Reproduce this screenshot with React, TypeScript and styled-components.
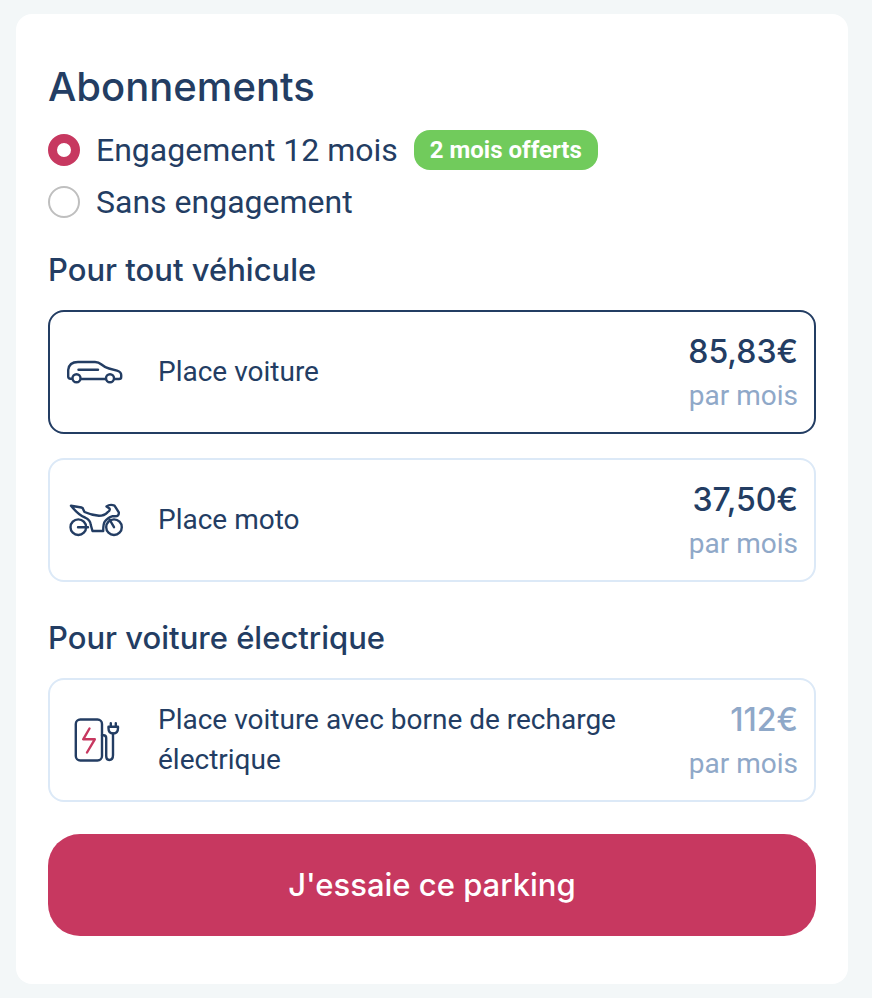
import React, { useState } from "react";
import styled, { createGlobalStyle } from "styled-components";

const navy = "#233d63";
const raspberry = "#c73860";
const mist = "#8fa8c8";
const heading = `"Inter", "Liberation Sans", sans-serif`;
const body = `"Roboto", "Noto Sans", sans-serif`;

const GlobalStyle = createGlobalStyle`
  *, *::before, *::after { box-sizing: border-box; }
  body {
    margin: 0;
    background: #f3f7f8;
    color: ${navy};
    font-family: ${body};
  }
`;

const Page = styled.main`
  padding: 14px 24px 14px 16px;
`;

const Card = styled.form`
  display: flex;
  flex-direction: column;
  padding: 48px 32px;
  border-radius: 16px;
  background: #fff;
`;

const Title = styled.h1`
  margin: 0 0 18px;
  font: 500 40px/50px ${heading};
`;

const Commitments = styled.fieldset`
  display: grid;
  gap: 12px;
  margin: 0 0 28px;
  padding: 0;
  border: 0;
`;

const RadioRow = styled.div`
  display: flex;
  align-items: center;
  gap: 16px;
  height: 40px;
`;

const RadioLabel = styled.label`
  display: flex;
  align-items: center;
  gap: 16px;
  font-size: 32px;
  line-height: 40px;
  cursor: pointer;
`;

const Radio = styled.input`
  appearance: none;
  width: 32px;
  height: 32px;
  margin: 0;
  border: 2px solid #bfbfbf;
  border-radius: 50%;
  background: #fff;
  &:checked { border: 9px solid ${raspberry}; }
`;

const Badge = styled.span`
  padding: 0 16px;
  border-radius: 16px;
  background: #71cb5c;
  color: #fff;
  font-size: 24px;
  font-weight: 700;
  line-height: 40px;
`;

const Section = styled.section`
  & + & { margin-top: 36px; }
`;

const SectionTitle = styled.h2`
  margin: 0 0 20px;
  font: 500 31px/40px ${heading};
`;

const OfferList = styled.div`
  display: grid;
  gap: 24px;
`;

const Offer = styled.button<{ $selected: boolean }>`
  display: flex;
  align-items: center;
  gap: 32px;
  width: 100%;
  min-height: 124px;
  padding: 12px 16px;
  border: 2px solid ${(p) => (p.$selected ? navy : "#dce9f7")};
  border-radius: 16px;
  background: #fff;
  color: ${navy};
  font-family: ${body};
  text-align: left;
  cursor: pointer;
`;

const OfferIcon = styled.svg`
  flex: none;
  width: 60px;
  height: 60px;
  fill: none;
  stroke: ${navy};
  stroke-width: 2.4;
  stroke-linecap: round;
  stroke-linejoin: round;
`;

const OfferName = styled.span`
  flex: 1;
  font-size: 28px;
  line-height: 40px;
`;

const Pricing = styled.span`
  display: grid;
  padding-top: 4px;
  text-align: right;
`;

const Price = styled.span<{ $muted?: boolean }>`
  color: ${(p) => (p.$muted ? mist : navy)};
  font: 500 32px/44px ${heading};
`;

const Period = styled.span`
  color: ${mist};
  font-size: 28px;
  line-height: 44px;
`;

const Submit = styled.button`
  margin-top: 32px;
  padding: 29px 32px;
  border: 0;
  border-radius: 32px;
  background: ${raspberry};
  color: #fff;
  font: 500 31px/44px ${heading};
  cursor: pointer;
`;

const CarIcon = () => (
  <OfferIcon viewBox="0 0 60 60" aria-hidden="true">
    <path d="M6 36.8H4.5Q2.2 36.8 2.2 34.5V28Q3 20 12 20H29Q32.5 20 35.5 22.5Q39 25.5 43 26.5L51 28.7Q55.2 30 55.2 33V35Q55.2 37 53 37H49M40 37H15" />
    <circle cx="10.5" cy="36.2" r="4" />
    <circle cx="44" cy="36.2" r="4" />
    <path d="M12.5 27.7H32" />
  </OfferIcon>
);

const MotorbikeIcon = () => (
  <OfferIcon viewBox="0 0 60 60" aria-hidden="true">
    <circle cx="12.3" cy="37.2" r="7.8" />
    <circle cx="48" cy="37.2" r="7.8" />
    <path d="M12 37.2H22M48 37.2L43.5 29.5" />
    <path d="M5 15.8L15.5 17.5Q17 17.8 17.5 20L18.5 22Q25 25 33 25.8Q38 25.8 41.5 22.3Q44.500 20.500 43.500 18.500L40.500 16.500Q44 13.800 48.500 15.600L52.800 22.300Q53.200 26.300 49 26.300H46Q42 27.300 39 31.300Q37.200 33.300 37.200 41H26.500L24.800 35Q24.500 30 19 27.500Q13 25.500 5 15.800Z" />
  </OfferIcon>
);

const ChargerIcon = () => (
  <OfferIcon viewBox="0 0 60 60" aria-hidden="true">
    <rect x="9.8" y="9.5" width="26.2" height="41" rx="4.5" />
    <g stroke={raspberry}>
      <path d="M23.5 18.5L17.2 29.3H28.8L21 42.5" />
    </g>
    <path d="M36 25.2H37.5Q40.2 25.2 40.2 28V46Q40.2 50 43.2 50Q47 50 47 45V23.5" />
    <path d="M42.5 16.8H52V18Q52 23.5 47.2 23.5T42.5 18ZM44.8 16.5V13.2M49.8 16.5V13.2" />
  </OfferIcon>
);

type OfferData = { id: string; name: string; price: string; Icon: React.FC; muted?: boolean };

const vehicleOffers: OfferData[] = [
  { id: "car", name: "Place voiture", price: "85,83€", Icon: CarIcon },
  { id: "moto", name: "Place moto", price: "37,50€", Icon: MotorbikeIcon },
];
const electricOffers: OfferData[] = [
  { id: "electric", name: "Place voiture avec borne de recharge électrique", price: "112€", Icon: ChargerIcon, muted: true },
];

export default function App() {
  const [commitment, setCommitment] = useState("year");
  const [selected, setSelected] = useState("car");

  const renderOffer = ({ id, name, price, Icon, muted }: OfferData) => (
    <Offer key={id} type="button" $selected={selected === id} aria-pressed={selected === id} onClick={() => setSelected(id)}>
      <Icon />
      <OfferName>{name}</OfferName>
      <Pricing>
        <Price $muted={muted}>{price}</Price>
        <Period>par mois</Period>
      </Pricing>
    </Offer>
  );

  return (
    <>
      <GlobalStyle />
      <Page>
        <Card onSubmit={(e) => e.preventDefault()}>
          <Title>Abonnements</Title>
          <Commitments aria-label="Abonnements">
            <RadioRow>
              <RadioLabel htmlFor="year">
                <Radio id="year" type="radio" name="commitment" checked={commitment === "year"} onChange={() => setCommitment("year")} />
                Engagement 12 mois
              </RadioLabel>
              <Badge>2 mois offerts</Badge>
            </RadioRow>
            <RadioRow>
              <RadioLabel htmlFor="free">
                <Radio id="free" type="radio" name="commitment" checked={commitment === "free"} onChange={() => setCommitment("free")} />
                Sans engagement
              </RadioLabel>
            </RadioRow>
          </Commitments>
          <Section>
            <SectionTitle>Pour tout véhicule</SectionTitle>
            <OfferList>{vehicleOffers.map(renderOffer)}</OfferList>
          </Section>
          <Section>
            <SectionTitle>Pour voiture électrique</SectionTitle>
            <OfferList>{electricOffers.map(renderOffer)}</OfferList>
          </Section>
          <Submit type="submit">J'essaie ce parking</Submit>
        </Card>
      </Page>
    </>
  );
}
